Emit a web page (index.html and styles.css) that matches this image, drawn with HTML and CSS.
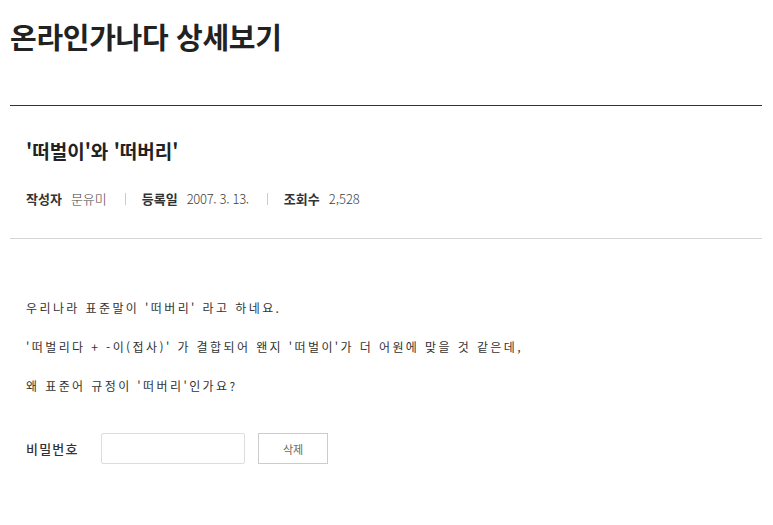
FILE: index.html
```html
<!DOCTYPE html>
<html lang="ko">
<head>
<meta charset="utf-8">
<link rel="stylesheet" href="styles.css">
</head>
<body>
<div class="page">
  <h1 class="page-title">온라인가나다 상세보기</h1>
  <div class="post">
    <div class="post-head">
      <h2 class="post-title">'떠벌이'와 '떠버리'</h2>
      <ul class="meta">
        <li><span class="meta-label">작성자</span><span class="meta-value">문유미</span></li>
        <li><span class="meta-label">등록일</span><span class="meta-value date">2007. 3. 13.</span></li>
        <li><span class="meta-label">조회수</span><span class="meta-value">2,528</span></li>
      </ul>
    </div>
    <div class="post-body">
      <p>우리나라 표준말이 '떠버리' 라고 하네요.</p>
      <p>'떠벌리다 + -이(접사)' 가 결합되어 왠지 '떠벌이'가 더 어원에 맞을 것 같은데,</p>
      <p>왜 표준어 규정이 '떠버리'인가요?</p>
    </div>
    <form class="delete-form">
      <label class="pw-label" for="pw">비밀번호</label>
      <input class="pw-input" id="pw" type="password">
      <button class="btn-delete" type="button">삭제</button>
    </form>
  </div>
</div>
</body>
</html>
```

FILE: styles.css
```css
* { box-sizing: border-box; }
html, body { margin: 0; padding: 0; background: #fff; }
body {
  font-family: "Noto Sans CJK KR", "Noto Sans", sans-serif;
  color: #222;
}
.page {
  padding: 0 11px 0 10px;
}
.page-title {
  margin: 0;
  padding-top: 17px;
  font-size: 29px;
  font-weight: 700;
  line-height: 38px;
  color: #222;
  letter-spacing: -0.3px;
  padding-bottom: 50px;
  border-bottom: 1px solid #333;
}
.post-head {
  padding: 30px 16px 29px;
  border-bottom: 1px solid #d4d4d4;
}
.post-title {
  margin: 0;
  font-size: 19px;
  font-weight: 700;
  line-height: 30px;
  color: #222;
}
.meta {
  list-style: none;
  margin: 0;
  padding: 0;
  margin-top: 23px;
  display: flex;
  align-items: center;
  font-size: 13px;
  line-height: 20px;
}
.meta li {
  display: flex;
  align-items: center;
}
.meta li + li::before {
  content: "";
  width: 1px;
  height: 12px;
  background: #ccc;
  margin: 0 16px 0 18px;
}
.meta-label {
  font-weight: 700;
  color: #333;
  margin-right: 9px;
}
.meta-value {
  color: #3e3e3e;
  font-weight: 300;
}
.meta-value.date {
  letter-spacing: -0.3px;
}
.post-body {
  padding: 58px 16px 0;
  font-size: 12px;
  color: #333;
  letter-spacing: 2.4px;
}
.post-body p {
  margin: 0 0 18px;
  line-height: 21px;
}
.delete-form {
  display: flex;
  align-items: center;
  padding: 19px 16px 0;
}
.pw-label {
  font-size: 13px;
  font-weight: 500;
  color: #333;
  letter-spacing: 1.2px;
  width: 75px;
}
.pw-input {
  width: 144px;
  height: 31px;
  border: 1px solid #ddd;
  border-radius: 2px;
  margin: 0;
  padding: 0 8px;
}
.btn-delete {
  margin-left: 13px;
  width: 70px;
  height: 31px;
  border: 1px solid #ccc;
  background: #fff;
  font-family: "Noto Sans CJK KR", sans-serif;
  font-size: 11px;
  color: #666;
  padding: 0;
}
```
